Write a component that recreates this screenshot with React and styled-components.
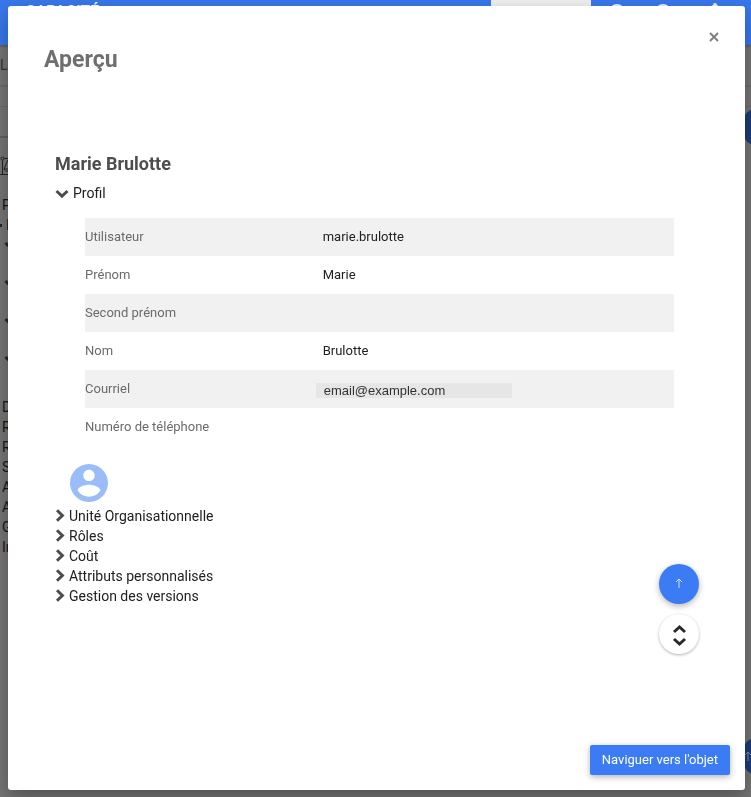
import React, { useState } from "react";
import styled, { createGlobalStyle } from "styled-components";

const fields = [
  { label: "Utilisateur", value: "marie.brulotte" },
  { label: "Prénom", value: "Marie" },
  { label: "Second prénom", value: "" },
  { label: "Nom", value: "Brulotte" },
  { label: "Courriel", value: "email@example.com", masked: true },
  { label: "Numéro de téléphone", value: "" },
];

const sections = [
  "Unité Organisationnelle",
  "Rôles",
  "Coût",
  "Attributs personnalisés",
  "Gestion des versions",
];

const treeItems = ["D", "R", "R", "S", "A", "A", "G", "In"];

function Chevron({ open }) {
  return open ? (
    <ChevronIcon viewBox="0 0 14 14" width="14" height="14" aria-hidden="true">
      <path d="M1.500 5L7 10.200L12.500 5" />
    </ChevronIcon>
  ) : (
    <ChevronIcon viewBox="0 0 10 14" width="10" height="14" aria-hidden="true">
      <path d="M2 1.200L7.400 6.500L2 11.800" />
    </ChevronIcon>
  );
}

function BackPage() {
  return (
    <Back aria-hidden="true">
      <TopBar>
        <Brand>CAPACITÉ</Brand>
        <ActiveTab />
        <TopIcons viewBox="0 0 120 24">
          <circle cx="12" cy="12" r="8" />
          <circle cx="58" cy="12" r="8" />
          <path d="M110 3a2 2 0 0 1 2 2c4 2 5 5 5 9v4h-14v-4c0-4 1-7 5-9a2 2 0 0 1 2-2z" />
        </TopIcons>
      </TopBar>
      <Crumbs>L</Crumbs>
      <Strip />
      <ToolStrip />
      <Tree>
        <Scales viewBox="0 0 30 20">
          <path d="M0 18.500h30M2.500 18V4M4 2.500h16M8 4l-4 9h8zM4 13c1 3 7 3 8 0" />
          <circle cx="2.500" cy="2.500" r="1.500" />
        </Scales>
        <TreeLine>P</TreeLine>
        <TreeLine $dot>I</TreeLine>
        {[0, 1, 2, 3].map((i) => (
          <TreeBranch key={i}>
            <Chevron open />
          </TreeBranch>
        ))}
        <TreeList>
          {treeItems.map((item, i) => (
            <TreeLine key={i}>{item}</TreeLine>
          ))}
        </TreeList>
      </Tree>
      <BackFab $top />
      <BackFab>
        <svg viewBox="0 0 40 40">
          <path d="M7 25v-9M4 19l3-3 3 3" />
        </svg>
      </BackFab>
    </Back>
  );
}

function Profile() {
  return (
    <ProfileBlock>
      <Table>
        <tbody>
          {fields.map(({ label, value, masked }) => (
            <tr key={label}>
              <th scope="row">{label}</th>
              <td>{masked ? <Masked>{value}</Masked> : value}</td>
            </tr>
          ))}
        </tbody>
      </Table>
      <Avatar viewBox="2 2 20 20" role="img" aria-label="Avatar">
        <path d="M12 2C6.480 2 2 6.480 2 12s4.480 10 10 10 10-4.480 10-10S17.520 2 12 2zm0 3c1.660 0 3 1.340 3 3s-1.340 3-3 3-3-1.340-3-3 1.340-3 3-3zm0 14.200c-2.500 0-4.710-1.280-6-3.220.030-1.990 4-3.080 6-3.080 1.990 0 5.970 1.090 6 3.080-1.290 1.940-3.500 3.220-6 3.220z" />
      </Avatar>
    </ProfileBlock>
  );
}

export default function App() {
  const [profileOpen, setProfileOpen] = useState(true);

  return (
    <>
      <GlobalStyle />
      <BackPage />
      <Modal role="dialog" aria-labelledby="preview-title">
        <Header>
          <h1 id="preview-title">Aperçu</h1>
          <CloseButton type="button" aria-label="Fermer">
            <svg viewBox="0 0 10 10">
              <path d="M1 1l8 8M9 1l-8 8" />
            </svg>
          </CloseButton>
        </Header>
        <Body>
          <h2>Marie Brulotte</h2>
          <SectionButton
            type="button"
            aria-expanded={profileOpen}
            onClick={() => setProfileOpen(!profileOpen)}
          >
            <Chevron open={profileOpen} />
            Profil
          </SectionButton>
          {profileOpen && <Profile />}
          {sections.map((name) => (
            <SectionButton key={name} type="button" aria-expanded={false}>
              <Chevron />
              {name}
            </SectionButton>
          ))}
        </Body>
        <Floating>
          <RoundButton type="button" aria-label="Haut de page" $primary>
            <svg viewBox="0 0 40 40">
              <path d="M20 24v-8M17 18l3-3 3 3" />
            </svg>
          </RoundButton>
          <RoundButton type="button" aria-label="Tout développer">
            <svg viewBox="0 0 40 40">
              <path d="M15 18l5.500-5 5.500 5M15 25l5.500 5 5.500-5" />
            </svg>
          </RoundButton>
        </Floating>
        <Footer>
          <NavigateButton type="button">Naviguer vers l'objet</NavigateButton>
        </Footer>
      </Modal>
    </>
  );
}

const GlobalStyle = createGlobalStyle`
  * {
    box-sizing: border-box;
  }
  body {
    margin: 0;
    overflow: hidden;
    background-color: #757575;
    font-family: Roboto, "Liberation Sans", sans-serif;
    font-size: 14px;
    color: #212121;
  }
  button {
    border: none;
    padding: 0;
    font: inherit;
    color: inherit;
    cursor: pointer;
  }
`;

const ChevronIcon = styled.svg`
  flex: none;
  fill: none;
  stroke: #4d4d4d;
  stroke-width: 3;
`;

const Back = styled.div`
  position: relative;
  height: 100vh;
  overflow: hidden;
  color: #161616;
`;

const TopBar = styled.div`
  height: 45px;
  display: flex;
  align-items: flex-start;
  background-color: #3878ec;
  box-shadow: 0 1px 3px rgba(0, 0, 0, 0.3);
  padding: 0 26px 0 25px;
`;

const Brand = styled.div`
  flex: 1;
  font-size: 16px;
  line-height: 24px;
  font-weight: 500;
  color: #ffffff;
`;

const ActiveTab = styled.div`
  width: 100px;
  height: 45px;
  background-color: #f0f0f0;
`;

const TopIcons = styled.svg`
  width: 120px;
  height: 24px;
  margin-left: 14px;
  fill: #e8eefb;
`;

const Crumbs = styled.div`
  height: 42px;
  line-height: 40px;
  font-size: 14px;
  color: #333333;
  border-bottom: 2px solid #6b6b6b;
`;

const Strip = styled.div`
  height: 20px;
  border-bottom: 1px solid #6b6b6b;
`;

const ToolStrip = styled.div`
  height: 31px;
  border-bottom: 2px solid #606060;
`;

const BackFab = styled.div`
  position: absolute;
  right: -30px;
  ${({ $top }) => ($top ? "top: 107px;" : "bottom: 21px;")}
  width: 40px;
  height: 40px;
  border-radius: 50%;
  background-color: #1c3d79;
  svg {
    display: block;
    fill: none;
    stroke: #7d8da8;
  }
`;

const Tree = styled.div`
  padding: 18px 2px;
`;

const Scales = styled.svg`
  display: block;
  width: 30px;
  height: 20px;
  margin: 0 0 19px -2px;
  fill: none;
  stroke: #262626;
`;

const TreeLine = styled.div`
  display: flex;
  align-items: center;
  height: 20px;
  ${({ $dot }) =>
    $dot &&
    `
    gap: 4px;
    margin-left: -2px;
    &::before {
      content: "";
      width: 2px;
      height: 3px;
      background-color: #262626;
    }
  `}
`;

const TreeBranch = styled.div`
  height: 38px;
  padding: 3px 0 0 2px;
  svg {
    stroke: #262626;
  }
`;

const TreeList = styled.div`
  padding-top: 10px;
`;

const Modal = styled.div`
  position: fixed;
  inset: 6px 6px 7px 8px;
  display: flex;
  flex-direction: column;
  border-radius: 3px;
  background-color: #ffffff;
  box-shadow: 0 8px 20px rgba(0, 0, 0, 0.3);
`;

const Header = styled.div`
  display: flex;
  justify-content: space-between;
  padding: 24px 24px 0 36px;
  h1 {
    margin: 15px 0 0;
    font-size: 23px;
    line-height: 30px;
    font-weight: 700;
    color: #6f6f6f;
  }
`;

const CloseButton = styled.button`
  width: 14px;
  height: 14px;
  background: none;
  svg {
    display: block;
    width: 10px;
    height: 10px;
    margin: auto;
    stroke: #808080;
    stroke-width: 2;
  }
`;

const Body = styled.div`
  flex: 1;
  display: flex;
  flex-direction: column;
  align-items: flex-start;
  padding: 76px 71px 0 47px;
  h2 {
    margin: 0 0 6px;
    font-size: 18px;
    line-height: 26px;
    font-weight: 700;
    color: #4d4d4d;
  }
`;

const SectionButton = styled.button`
  display: flex;
  align-items: center;
  gap: 4px;
  height: 20px;
  line-height: 20px;
  background: none;
`;

const ProfileBlock = styled.div`
  align-self: stretch;
  padding: 15px 0 4px 30px;
`;

const Table = styled.table`
  width: 100%;
  table-layout: fixed;
  border-collapse: collapse;
  font-size: 13px;
  tr {
    height: 38px;
  }
  tr:nth-child(odd) {
    background-color: #f1f1f1;
  }
  th,
  td {
    padding: 0 0 1px;
    text-align: left;
    font-weight: 400;
  }
  th {
    width: 39%;
    color: #6b6b6b;
  }
  td {
    padding-left: 8px;
  }
`;

const Masked = styled.span`
  display: block;
  width: 196px;
  margin: 3px 0 0 -7px;
  padding-left: 8px;
  font-family: "Liberation Sans", Arial, sans-serif;
  font-size: 13px;
  line-height: 15px;
  color: #333333;
  background-color: #e6e6e6;
`;

const Avatar = styled.svg`
  display: block;
  width: 38px;
  height: 38px;
  margin: 18px 0 0 -15px;
  fill: #9abdfa;
`;

const Floating = styled.div`
  position: absolute;
  right: 46px;
  bottom: 136px;
  display: flex;
  flex-direction: column;
  gap: 10px;
`;

const RoundButton = styled.button`
  width: 40px;
  height: 40px;
  border-radius: 50%;
  background-color: ${({ $primary }) => ($primary ? "#3b7cf4" : "#ffffff")};
  box-shadow: ${({ $primary }) =>
    $primary ? "0 2px 6px rgba(0, 0, 0, 0.3)" : "0 1px 3px rgba(0, 0, 0, 0.3)"};
  svg {
    display: block;
    fill: none;
    stroke: ${({ $primary }) => ($primary ? "#d5e3fd" : "#2b2b2b")};
    stroke-width: ${({ $primary }) => ($primary ? 1 : 3)};
  }
`;

const Footer = styled.div`
  display: flex;
  justify-content: flex-end;
  padding: 15px;
`;

const NavigateButton = styled.button`
  height: 30px;
  padding: 0 12px 2px;
  border-radius: 2px;
  font-size: 13px;
  color: #ffffff;
  background-color: #3b7cf4;
  box-shadow: 0 2px 6px rgba(0, 0, 0, 0.3);
`;
